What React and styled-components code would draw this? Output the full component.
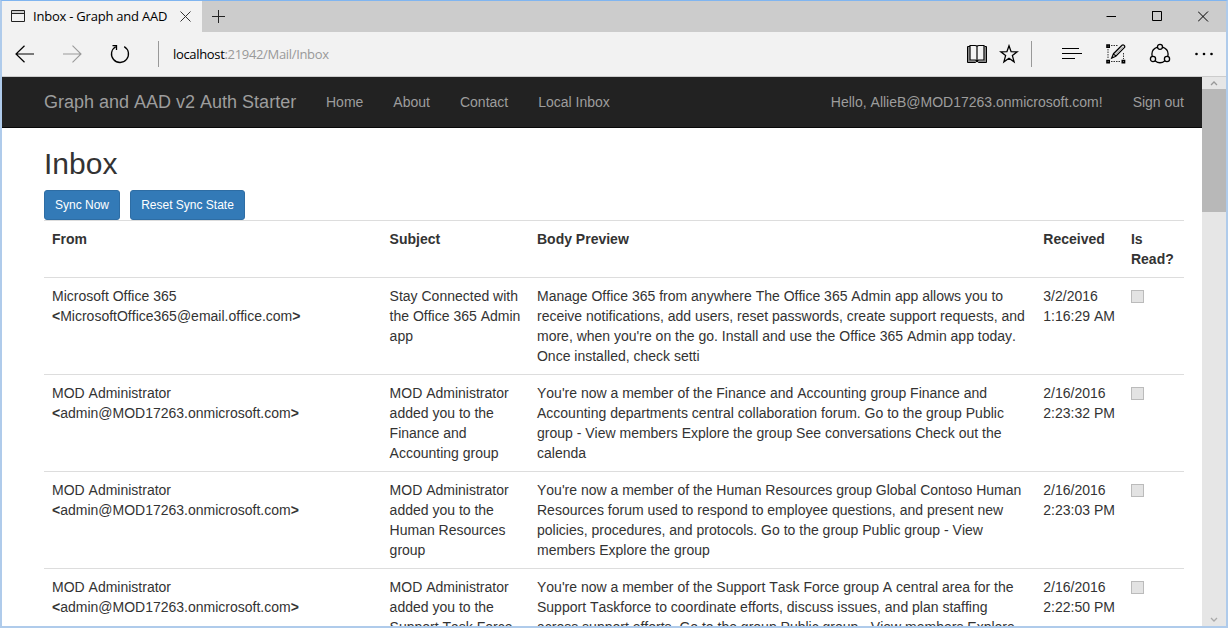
import React from 'react';
import styled, { createGlobalStyle } from 'styled-components';

const GlobalStyle = createGlobalStyle`
  * { box-sizing: border-box; }
  body {
    margin: 0;
    overflow: hidden;
    font-family: "Liberation Sans", Arial, sans-serif;
    font-size: 14px;
    line-height: 20px;
    font-kerning: none;
    color: #333;
    background: #fff;
  }
`;

const Window = styled.div`
  display: flex;
  flex-direction: column;
  width: 1228px;
  height: 628px;
  overflow: hidden;
  border: 2px solid #afcbeb;
  border-top: 1px solid #80b5f0;
  background: #fff;
`;

const TabBar = styled.div`
  flex: none;
  display: flex;
  height: 31px;
  background: #ccc;
`;

const Tab = styled.div`
  display: flex;
  align-items: center;
  width: 200px;
  padding-left: 9px;
  background: #f2f2f2;
  font: 13px/31px "Open Sans", "Noto Sans", sans-serif;
  color: #000;
  svg { flex: none; }
`;

const TabTitle = styled.span`
  width: 134px;
  margin: 0 13px 0 7px;
  white-space: nowrap;
  letter-spacing: -0.22px;
`;

const NewTab = styled.div`
  display: flex;
  align-items: center;
  padding-left: 10px;
`;

const WindowControls = styled.div`
  display: flex;
  align-items: center;
  gap: 35px;
  margin-left: auto;
  padding-right: 17px;
`;

const Toolbar = styled.div`
  flex: none;
  display: flex;
  align-items: center;
  height: 45px;
  padding: 0 13px 1px 13px;
  background: #f2f2f2;
  border-bottom: 1px solid #ccc;
  svg { flex: none; }
`;

const History = styled.div`
  display: flex;
  align-items: center;
  gap: 27px;
  svg:last-child { margin-left: 1px; }
`;

const Separator = styled.i`
  width: 1px;
  height: 26px;
  margin-left: ${(p) => p.$before}px;
  background: #999;
`;

const Address = styled.div`
  flex: 1;
  padding-left: 14px;
  font: 13px/20px "Open Sans", "Noto Sans", sans-serif;
  letter-spacing: -0.33px;
  color: #999;
  b { font-weight: 400; color: #000; }
`;

const Reading = styled.div`
  display: flex;
  align-items: center;
  gap: 12px;
`;

const Tools = styled.div`
  display: flex;
  align-items: center;
  gap: 24px;
  margin-left: 30px;
  svg:nth-child(2) { margin-right: -1px; }
`;

const Viewport = styled.div`
  flex: 1;
  min-height: 0;
  display: flex;
`;

const Page = styled.div`
  flex: 1;
  min-width: 0;
  overflow: hidden;
`;

const Navbar = styled.nav`
  display: flex;
  align-items: center;
  height: 51px;
  padding: 0 18px 0 42px;
  background: #222;
  border-bottom: 1px solid #080808;
  color: #9d9d9d;
  white-space: nowrap;
`;

const Brand = styled.span`
  width: 252px;
  font-size: 18px;
`;

const NavLinks = styled.div`
  display: flex;
  gap: 30px;
  margin-left: ${(p) => (p.$end ? 'auto' : '30px')};
`;

const Content = styled.main`
  width: 1140px;
  margin-left: 42px;
`;

const Heading = styled.h2`
  margin: 0;
  padding: 19px 0 10px;
  font-size: 30px;
  line-height: 33px;
  font-weight: 400;
`;

const Buttons = styled.div`
  display: flex;
  gap: 10px;
`;

const Button = styled.button`
  width: ${(p) => p.$width}px;
  height: 30px;
  padding: 0;
  border: 1px solid #2e6da4;
  border-radius: 3px;
  background: #337ab7;
  color: #fff;
  font: 12px/18px "Liberation Sans", Arial, sans-serif;
  white-space: nowrap;
`;

const Table = styled.div`
  white-space: nowrap;
`;

const Row = styled.div`
  display: grid;
  grid-template-columns: 337.6px 147.4px 506.3px 87.7px 61px;
  height: ${(p) => (p.$head ? 57 : 97)}px;
  border-top: 1px solid #ddd;
  font-weight: ${(p) => (p.$head ? 700 : 400)};
`;

const Cell = styled.div`
  padding: 8px;
  b { font-weight: 700; }
`;

const Line = styled.div`
  height: 20px;
`;

const Check = styled.i`
  display: block;
  width: 13px;
  height: 13px;
  margin-top: 4px;
  border: 1px solid #bbb;
  background: #e3e3e3;
`;

const Scrollbar = styled.div`
  flex: none;
  display: flex;
  flex-direction: column;
  width: 24px;
  background: #e6e6e6;
`;

const ScrollArrow = styled.div`
  display: flex;
  justify-content: center;
  align-items: center;
  height: 12px;
  margin-top: ${(p) => (p.$end ? 'auto' : '0')};
`;

const Thumb = styled.div`
  height: 123px;
  background: #b8b8b8;
`;

const Icon = ({ w, h, color = '#000', width = 1, children }) => (
  <svg width={w} height={h} viewBox={`0 0 ${w} ${h}`} fill="none" stroke={color} strokeWidth={width}>
    {children}
  </svg>
);

const messages = [
  {
    from: ['Microsoft Office 365', 'MicrosoftOffice365@email.office.com'],
    subject: ['Stay Connected with', 'the Office 365 Admin', 'app'],
    body: [
      'Manage Office 365 from anywhere The Office 365 Admin app allows you to',
      'receive notifications, add users, reset passwords, create support requests, and',
      "more, when you're on the go. Install and use the Office 365 Admin app today.",
      'Once installed, check setti',
    ],
    received: ['3/2/2016', '1:16:29 AM'],
  },
  {
    from: ['MOD Administrator', 'admin@MOD17263.onmicrosoft.com'],
    subject: ['MOD Administrator', 'added you to the', 'Finance and', 'Accounting group'],
    body: [
      "You're now a member of the Finance and Accounting group Finance and",
      'Accounting departments central collaboration forum. Go to the group Public',
      'group - View members Explore the group See conversations Check out the',
      'calenda',
    ],
    received: ['2/16/2016', '2:23:32 PM'],
  },
  {
    from: ['MOD Administrator', 'admin@MOD17263.onmicrosoft.com'],
    subject: ['MOD Administrator', 'added you to the', 'Human Resources', 'group'],
    body: [
      "You're now a member of the Human Resources group Global Contoso Human",
      'Resources forum used to respond to employee questions, and present new',
      'policies, procedures, and protocols. Go to the group Public group - View',
      'members Explore the group',
    ],
    received: ['2/16/2016', '2:23:03 PM'],
  },
  {
    from: ['MOD Administrator', 'admin@MOD17263.onmicrosoft.com'],
    subject: ['MOD Administrator', 'added you to the', 'Support Task Force'],
    body: [
      "You're now a member of the Support Task Force group A central area for the",
      'Support Taskforce to coordinate efforts, discuss issues, and plan staffing',
      'across support efforts. Go to the group Public group - View members Explore',
    ],
    received: ['2/16/2016', '2:22:50 PM'],
  },
];

const Lines = ({ items }) => items.map((text) => <Line key={text}>{text}</Line>);

export default function App() {
  return (
    <Window>
      <GlobalStyle />
      <TabBar>
        <Tab>
          <Icon w={15} h={13} color="#222">
            <path d="M.5 .5H13.5V11.5H.5ZM.5 3.5H13.5" />
            <path d="M1 2H13" stroke="#aaa" />
          </Icon>
          <TabTitle>Inbox - Graph and AAD</TabTitle>
          <Icon w={11} h={11} color="#333">
            <path d="M.5 .5L10.5 10.5M10.5 .5L.5 10.5" />
          </Icon>
        </Tab>
        <NewTab>
          <Icon w={13} h={13} color="#222">
            <path d="M6.5 0V13M0 6.5H13" />
          </Icon>
        </NewTab>
        <WindowControls>
          <Icon w={11} h={11}><path d="M.5 5.5H10" /></Icon>
          <Icon w={11} h={11}><path d="M0 .5H9.5V9.5H.5V.5" /></Icon>
          <Icon w={11} h={11}><path d="M0 .5L10 10.5M10 .5L0 10.5" /></Icon>
        </WindowControls>
      </TabBar>

      <Toolbar>
        <History>
          <Icon w={20} h={18} width={1.2}><path d="M19 9H1M9.500 .7L1 9L9.500 17.300" /></Icon>
          <Icon w={20} h={18} color="#999" width={1.1}><path d="M1 9H19.200M10.500 .7L19 9L10.500 17.300" /></Icon>
          <Icon w={20} h={20} width={1.3}>
            <path d="M14.200 2.600A8.500 8.500 0 1 1 5.600 2.700M2.500 1.700H6.500V6" />
          </Icon>
        </History>
        <Separator $before={28} />
        <Address><b>localhost</b>:21942/Mail/Inbox</Address>
        <Reading>
          <Icon w={20} h={20}>
            <path d="M1.500 3V17.500H9.500M10.500 17.500H18.500V3" stroke="#888" strokeWidth="2" />
            <path d="M.5 2.500V18.500H8.500L10 17L11.500 18.500H19.500V2.500H17.500" />
            <path d="M10 2.500V16.500M3 16H8.500L10 17L11.500 16H17V1.500H12Q10.500 1.500 10 2.500Q9.500 1.500 8 1.500H3ZM.5 2.500H3" strokeWidth="1.200" />
          </Icon>
          <Icon w={20} h={20} width={1.3}>
            <path d="M10 1.800L12.100 7.700L18.200 7.800L13.400 11.600L15.100 17.800L10 14.200L4.900 17.800L6.600 11.600L1.800 7.800L7.900 7.700Z" />
          </Icon>
        </Reading>
        <Separator $before={12} />
        <Tools>
          <Icon w={20} h={20}><path d="M0 4.500H17M0 9.500H20M0 14.500H13" /></Icon>
          <Icon w={20} h={20}>
            <path d="M5 1.500H12M2 5V15M5 17.500H15M17.500 9V15" stroke="#333" strokeDasharray="1.500 1" />
            <path d="M1 1H3.200V3.200H1ZM1 16.500H3.200V18.700H1ZM16.300 16.500H18.500V18.700H16.300Z" strokeWidth="1.600" />
            <path d="M5.700 14L7.500 9.700L16 1.300Q17 .4 18.200 1.400Q19.300 2.600 18.300 3.700L9.800 12.200L5.700 14ZM7.500 9.700L9.800 12.200" strokeWidth="1.200" />
            <path d="M9 10.700L17 2.700" stroke="#999" />
          </Icon>
          <Icon w={22} h={22} width={1.3}>
            <circle cx="11" cy="3.800" r="2.500" />
            <circle cx="4" cy="16" r="2.600" />
            <circle cx="18" cy="16" r="2.600" />
            <path d="M8.500 4.200Q3 6 2.900 11L3.200 13.400M13.500 4.200Q19 6 19.100 11L18.800 13.400M6 17.700Q11 21.800 16 17.700" />
          </Icon>
          <Icon w={18} h={4}>
            <g fill="#000" stroke="none">
              <circle cx="1.500" cy="2" r="1.300" />
              <circle cx="9" cy="2" r="1.300" />
              <circle cx="16.500" cy="2" r="1.300" />
            </g>
          </Icon>
        </Tools>
      </Toolbar>

      <Viewport>
        <Page>
          <Navbar>
            <Brand>Graph and AAD v2 Auth Starter</Brand>
            <NavLinks>
              <span>Home</span>
              <span>About</span>
              <span>Contact</span>
              <span>Local Inbox</span>
            </NavLinks>
            <NavLinks $end>
              <span>Hello, AllieB@MOD17263.onmicrosoft.com!</span>
              <span>Sign out</span>
            </NavLinks>
          </Navbar>
          <Content>
            <Heading>Inbox</Heading>
            <Buttons>
              <Button $width={76}>Sync Now</Button>
              <Button $width={115}>Reset Sync State</Button>
            </Buttons>
            <Table>
              <Row $head>
                <Cell>From</Cell>
                <Cell>Subject</Cell>
                <Cell>Body Preview</Cell>
                <Cell>Received</Cell>
                <Cell><Lines items={['Is', 'Read?']} /></Cell>
              </Row>
              {messages.map((m, i) => (
                <Row key={i}>
                  <Cell>
                    <Line>{m.from[0]}</Line>
                    <Line><b>&lt;</b>{m.from[1]}<b>&gt;</b></Line>
                  </Cell>
                  <Cell><Lines items={m.subject} /></Cell>
                  <Cell><Lines items={m.body} /></Cell>
                  <Cell><Lines items={m.received} /></Cell>
                  <Cell><Check /></Cell>
                </Row>
              ))}
            </Table>
          </Content>
        </Page>
        <Scrollbar>
          <ScrollArrow>
            <Icon w={8} h={6} color="#999" width={1.3}><path d="M1 5L4 2L7 5" /></Icon>
          </ScrollArrow>
          <Thumb />
          <ScrollArrow $end>
            <Icon w={8} h={6} color="#aaa" width={1.3}><path d="M1 1L4 4L7 1" /></Icon>
          </ScrollArrow>
        </Scrollbar>
      </Viewport>
    </Window>
  );
}
